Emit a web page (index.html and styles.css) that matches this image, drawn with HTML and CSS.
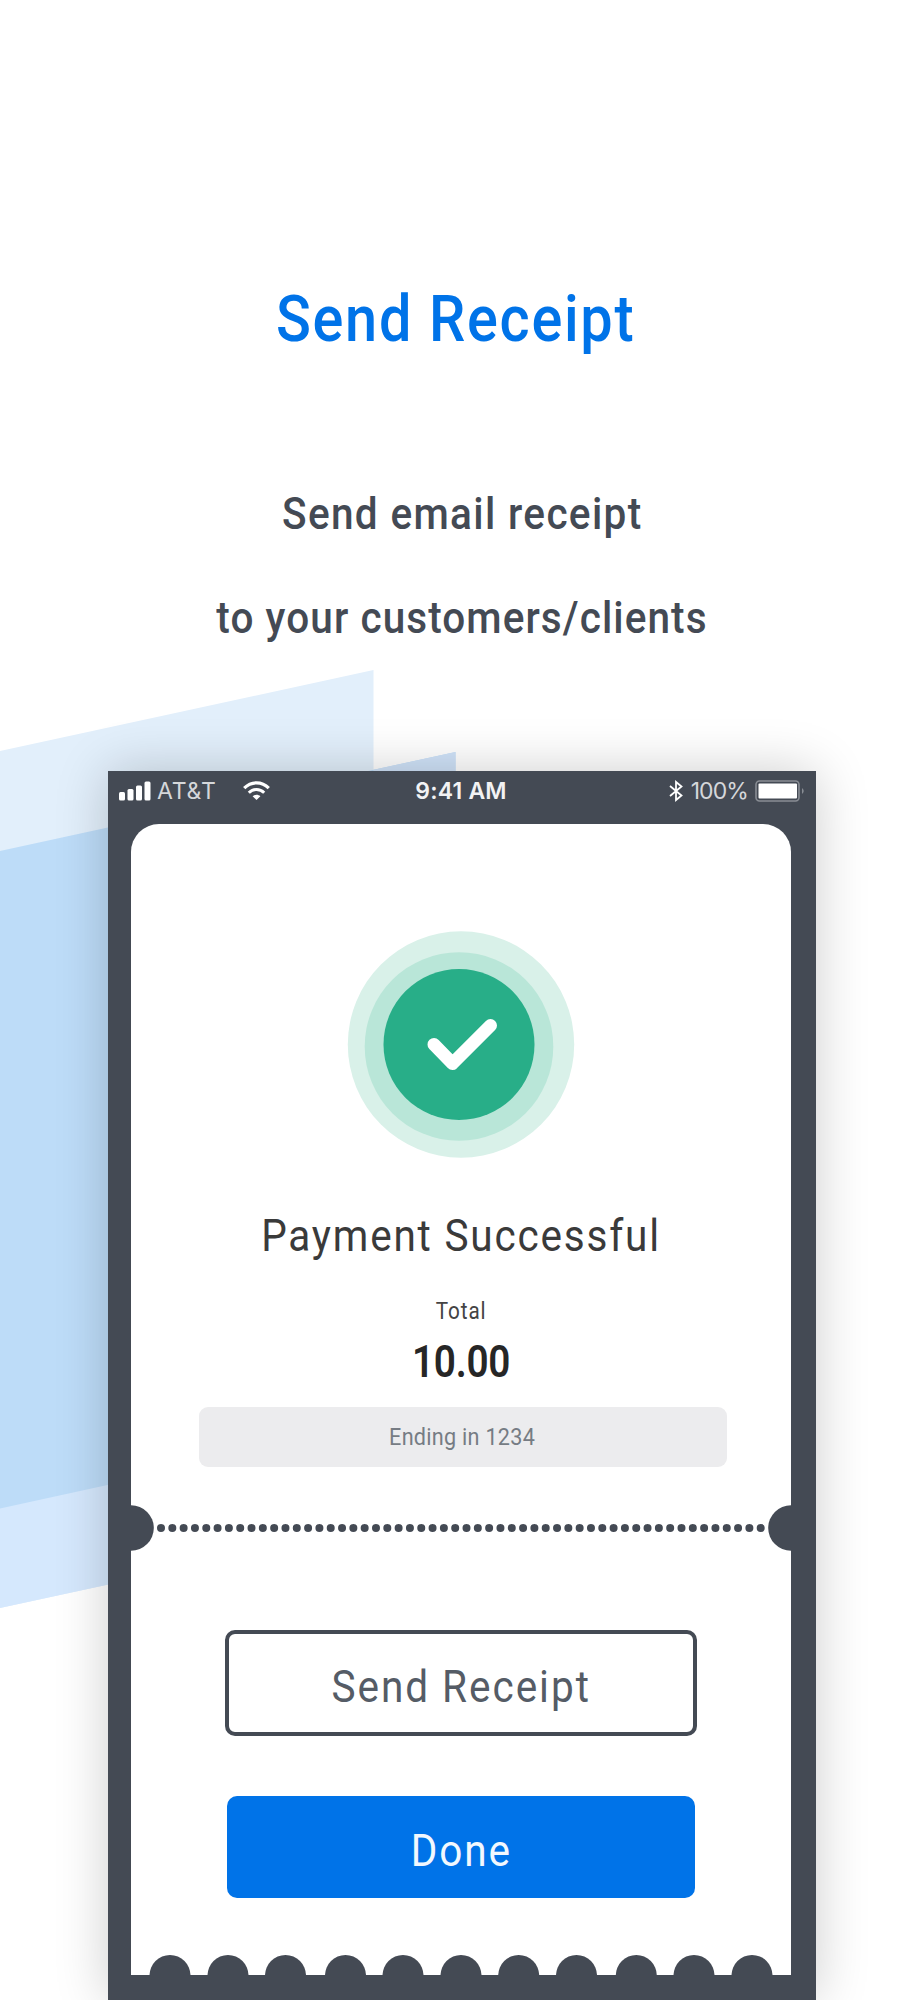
FILE: index.html
```html
<!DOCTYPE html>
<html lang="en">
<head>
    <meta charset="UTF-8">
    <meta name="viewport" content="width=device-width, initial-scale=1.0">
    <title>Send Receipt</title>
    <link rel="stylesheet" href="styles.css">
</head>
<body>
    <svg class="backdrop" viewBox="0 0 924 2000">
        <polygon points="0,751 373.5,670 373.5,1527 0,1608" fill="#e2effb"/>
        <polygon points="0,1400 373.5,1400 373.5,1527 0,1608" fill="#d5e8fd"/>
        <polygon points="0,851 455.5,752 455.5,1409 0,1508.5" fill="#bddcf8"/>
        <polygon points="373.5,769.8 455.5,752 455.5,800 373.5,800" fill="#d0e3f9"/>
    </svg>

    <header class="hero">
        <h1><span>Send Receipt</span></h1>
        <p><span class="line1">Send email receipt</span><br><span class="line2">to your customers/clients</span></p>
    </header>

    <main class="phone">
        <div class="status-bar">
            <div class="status-left">
                <svg class="signal" viewBox="0 0 32 20">
                    <rect x="0" y="11" width="6" height="8.500" rx="1.500"/>
                    <rect x="8.500" y="8" width="6" height="11.500" rx="1.500"/>
                    <rect x="17" y="4.500" width="6" height="15" rx="1.500"/>
                    <rect x="25.500" y="0.500" width="6" height="19" rx="1.500"/>
                </svg>
                <span class="carrier">AT&amp;T</span>
                <svg class="wifi" viewBox="0 0 27 20" fill="none" stroke="#fff">
                    <path d="M1.200 7.200C8.200 0 18.800 0 25.800 7.200" stroke-width="3.200"/>
                    <path d="M5.800 11.800C10.200 7.400 16.800 7.400 21.200 11.800" stroke-width="3"/>
                    <path d="M13.500 19L9.600 15.200C11.800 13.200 15.200 13.200 17.400 15.200Z" fill="#fff" stroke="none"/>
                </svg>
            </div>
            <span class="time">9:41 AM</span>
            <div class="status-right">
                <svg class="bluetooth" viewBox="0 0 14 22" fill="none" stroke="#fff" stroke-width="1.800">
                    <path d="M1 6L12.500 15.500L7 20V2L12.500 6.500L1 16"/>
                </svg>
                <span class="percent">100%</span>
                <svg class="battery" viewBox="0 0 50 22">
                    <rect x="1" y="1" width="43" height="20" rx="3.500" fill="none" stroke="#898d94" stroke-width="1.600"/>
                    <rect x="3.500" y="3.500" width="38.500" height="15" rx="1" fill="#fff"/>
                    <path d="M47 8Q50.500 11 47 14Z" fill="#898d94"/>
                </svg>
            </div>
        </div>

        <div class="ticket">
            <section class="summary">
                <svg class="success" viewBox="0 0 228 228">
                    <circle cx="114" cy="113.500" r="113.200" fill="#d9f1e9"/>
                    <circle cx="112" cy="115.500" r="94.300" fill="#b9e6d8"/>
                    <circle cx="112" cy="113.500" r="75.500" fill="#28ae88"/>
                    <path d="M87 113.500L105.500 132.500L143.500 94.500" fill="none" stroke="#fff" stroke-width="13" stroke-linecap="round" stroke-linejoin="round"/>
                </svg>
                <h2><span>Payment Successful</span></h2>
                <div class="label"><span>Total</span></div>
                <div class="amount"><span>10.00</span></div>
                <div class="card-number"><span>Ending in 1234</span></div>
            </section>

            <svg class="tear-line" viewBox="0 0 660 46">
                <circle cx="0" cy="23" r="22.800"/>
                <circle cx="660" cy="23" r="22.800"/>
                <line x1="30" y1="23" x2="630" y2="23" stroke-width="8" stroke-linecap="round" stroke-dasharray="0 11.315"/>
            </svg>

            <section class="actions">
                <button class="btn-outline"><span>Send Receipt</span></button>
                <button class="btn-primary"><span>Done</span></button>
            </section>

            <svg class="scallops" viewBox="0 0 660 20">
                <circle cx="39" cy="20.500" r="20.500"/>
                <circle cx="97" cy="20.500" r="20.500"/>
                <circle cx="154.500" cy="20.500" r="20.500"/>
                <circle cx="214.500" cy="20.500" r="20.500"/>
                <circle cx="272" cy="20.500" r="20.500"/>
                <circle cx="330" cy="20.500" r="20.500"/>
                <circle cx="387.700" cy="20.500" r="20.500"/>
                <circle cx="445.500" cy="20.500" r="20.500"/>
                <circle cx="505.300" cy="20.500" r="20.500"/>
                <circle cx="563" cy="20.500" r="20.500"/>
                <circle cx="621" cy="20.500" r="20.500"/>
            </svg>
        </div>
    </main>
</body>
</html>
```
FILE: styles.css
```css
* { box-sizing: border-box; margin: 0; padding: 0; }
body { width: 924px; height: 2000px; overflow: hidden; background: #fff; font-family: Roboto, "Liberation Sans", sans-serif; color: #444a54; text-align: center; }
svg { display: block; flex: none; }
h1, h2, p, .label, .amount { white-space: nowrap; }

.backdrop { position: absolute; left: 0; top: 0; z-index: -1; width: 924px; height: 2000px; }

/* narrow the letters, then open the tracking again */
.hero span, .summary span, .actions span { display: inline-block; transform: scaleX(0.9); }

.hero { height: 771px; padding-top: 280px; }
.hero h1 { font-size: 64px; line-height: 80px; font-weight: 500; letter-spacing: 1.9px; color: #0073e8; padding-right: 12px; }
.hero p { margin-top: 102px; font-size: 45px; line-height: 103.500px; font-weight: 500; letter-spacing: 1.5px; }
.hero .line2 { letter-spacing: 1.2px; }

.phone { width: 708px; height: 1229px; margin-left: 108px; padding: 0 25px 0 23px; background: #444a54; box-shadow: 0 0 50px rgba(0, 0, 0, 0.2); }

.status-bar { display: grid; grid-template-columns: 1fr auto 1fr; align-items: center; height: 53px; padding-bottom: 13px; margin: 0 -14px 0 -12px; font-family: Inter, sans-serif; font-size: 23px; line-height: 40px; color: #fff; }
.status-left, .status-right { display: flex; align-items: center; }
.status-right { justify-content: flex-end; }
.signal { width: 32px; height: 20px; fill: #fff; margin-right: 6px; }
.carrier, .percent { color: #d5d7da; font-weight: 400; }
.carrier { letter-spacing: 0.8px; }
.wifi { width: 27px; height: 20px; margin-left: 26px; }
.time { font-weight: 600; color: #f2f2f3; letter-spacing: 0.2px; margin-right: 2px; }
.percent { letter-spacing: -0.9px; }
.bluetooth { width: 14px; height: 22px; margin-right: 8px; }
.battery { width: 50px; height: 22px; margin-left: 7px; }

.ticket { width: 660px; height: 1151px; background: #fff; border-radius: 28px 28px 0 0; }
.summary { display: flex; flex-direction: column; align-items: center; height: 681px; padding-top: 107px; }
.success { width: 228px; height: 228px; }
.summary h2 { margin-top: 47px; font-size: 45px; line-height: 60px; font-weight: 400; letter-spacing: 2px; color: #3a3a3a; }
.label { margin-top: 31px; font-size: 23px; line-height: 30px; font-weight: 400; letter-spacing: 1px; color: #444; }
.amount { margin-top: 5px; font-size: 45px; line-height: 60px; font-weight: 600; letter-spacing: -0.3px; color: #262626; }
.summary .amount span { transform: scaleX(0.86); }
.card-number { width: 528px; height: 60px; margin: 15px 0 0 3px; border-radius: 9px; background: #ececee; font-size: 24px; line-height: 60px; color: #767c84; }
.summary .card-number span { transform: scaleX(0.9); letter-spacing: 0.3px; }

.tear-line { width: 660px; height: 46px; fill: #444a54; stroke: none; }
.tear-line line { stroke: #444a54; }

.actions { display: flex; flex-direction: column; align-items: center; gap: 60px; height: 404px; padding-top: 79px; }
.actions button { font-family: inherit; font-size: 45px; font-weight: 400; letter-spacing: 2.2px; border-radius: 10px; padding-top: 6px; }
.btn-outline { width: 472px; height: 106px; border: 4px solid #444a54; background: #fff; color: #555c66; }
.btn-primary { width: 468px; height: 102px; border: none; background: #0073e8; color: #f2f8fe; }
.scallops { width: 660px; height: 20px; fill: #444a54; }
```
